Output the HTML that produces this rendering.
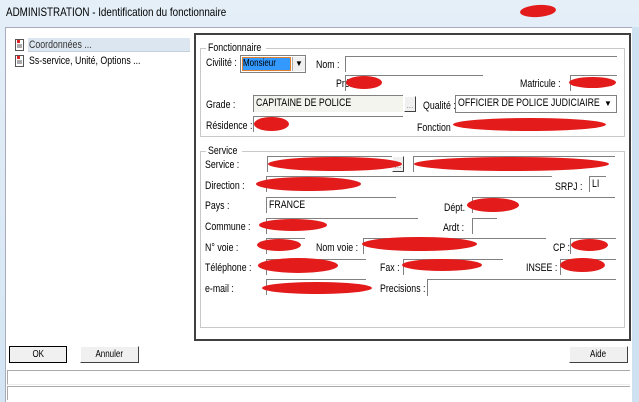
<!DOCTYPE html>
<html><head><meta charset="utf-8"><style>
*{margin:0;padding:0;box-sizing:border-box}
body{width:639px;height:402px;overflow:hidden;background:linear-gradient(#e4eff8,#d3e5f3);font-family:"Liberation Sans",sans-serif;font-size:11px;color:#000;position:relative}
.a{position:absolute;white-space:nowrap}
.t{position:absolute;white-space:nowrap;transform:scaleX(.8);transform-origin:0 0}
.s{display:inline-block;transform:scaleX(.8);transform-origin:0 0;white-space:nowrap}
.f{position:absolute;border-top:1px solid #808080;border-left:1px solid #808080;height:16px}
.r{position:absolute;background:#e31b1b;border-radius:50%}
.btn{position:absolute;border:1px solid #fff;border-right:1px solid #404040;border-bottom:1px solid #404040;background:#f0f0f0;text-align:center;line-height:16px;font-size:10px}
.gb{position:absolute;border:1px solid #c8c8c8}
.gl{position:absolute;background:#fff;padding:0 2px;top:-7px;left:5px;font-size:11px;width:60px}
</style></head><body>
<div class="t" style="left:6px;top:5px;font-size:12px;transform:scaleX(.82)">ADMINISTRATION - Identification du fonctionnaire</div>
<div class="r" style="left:520px;top:5px;width:36px;height:12px;transform:rotate(-4deg)"></div>
<div class="a" style="left:5px;top:27px;width:627px;height:375px;background:#fff;border-top:1px solid #aab;border-left:1px solid #aab"></div>
<div class="a" style="left:632px;top:27px;width:7px;height:375px;background:#cfe2f2"></div>
<!-- tree -->
<div class="a" style="left:28px;top:38px;width:162px;height:14px;background:#dce6f0;border-bottom:1px solid #c5d0dc"></div>
<svg class="a" style="left:15px;top:39px" width="10" height="12"><rect x="0.5" y="0.5" width="8" height="11" fill="#fff" stroke="#555"/><rect x="2" y="1" width="3" height="3" fill="#d22"/><line x1="2" y1="6" x2="7" y2="6" stroke="#555"/><line x1="2" y1="8" x2="7" y2="8" stroke="#555"/></svg>
<svg class="a" style="left:15px;top:55px" width="10" height="12"><rect x="0.5" y="0.5" width="8" height="11" fill="#fff" stroke="#555"/><rect x="2" y="1" width="3" height="3" fill="#d22"/><line x1="2" y1="6" x2="7" y2="6" stroke="#555"/><line x1="2" y1="8" x2="7" y2="8" stroke="#555"/></svg>
<div class="t" style="left:29px;top:39px;color:#333">Coordonnées ...</div>
<div class="t" style="left:29px;top:55px">Ss-service, Unité, Options ...</div>
<!-- main panel -->
<div class="a" style="left:194px;top:33px;width:437px;height:308px;border:2px solid #404040"></div>
<div class="gb" style="left:200px;top:48px;width:425px;height:89px"><span class="gl"><span class="s">Fonctionnaire</span></span></div>
<div class="t" style="left:206px;top:57px">Civilité :</div>
<div class="a" style="left:240px;top:55px;width:66px;height:18px;border:1px solid #808080;background:#fff"></div>
<div class="a" style="left:242px;top:57px;width:49px;height:14px;background:#3399ff;border:1px solid #e08030;font-size:10px;line-height:12px"><span class="s">Monsieur</span></div>
<div class="a" style="left:292px;top:57px;width:13px;height:14px;background:#f0f0f0;border-left:1px solid #aaa;text-align:center;font-size:8px;line-height:14px">▼</div>
<div class="t" style="left:316px;top:59px">Nom :</div>
<div class="f" style="left:345px;top:56px;width:272px"></div>
<div class="t" style="left:336px;top:78px">Prénom :</div>
<div class="f" style="left:345px;top:75px;width:138px"></div>
<div class="r" style="left:346px;top:76px;width:36px;height:13px"></div>
<div class="t" style="left:520px;top:78px">Matricule :</div>
<div class="f" style="left:570px;top:75px;width:47px"></div>
<div class="r" style="left:569px;top:77px;width:47px;height:11px"></div>
<div class="t" style="left:206px;top:99px">Grade :</div>
<div class="a" style="left:253px;top:95px;width:150px;height:17px;background:#f4f4ee;border-top:1px solid #808080;border-left:1px solid #808080;padding:1px 2px"><span class="s">CAPITAINE DE POLICE</span></div>
<div class="btn" style="left:404px;top:96px;width:12px;height:16px;font-size:8px;line-height:18px;color:#777">...</div>
<div class="t" style="left:423px;top:100px">Qualité :</div>
<div class="a" style="left:455px;top:95px;width:162px;height:18px;border:1px solid #808080;background:#fff;padding:1px 2px"><span class="s">OFFICIER DE POLICE JUDICIAIRE</span></div>
<div class="a" style="left:604px;top:99px;font-size:8px">▼</div>
<div class="t" style="left:206px;top:120px">Résidence :</div>
<div class="f" style="left:253px;top:116px;width:150px"></div>
<div class="r" style="left:254px;top:117px;width:35px;height:14px"></div>
<div class="t" style="left:417px;top:122px">Fonction</div>
<div class="r" style="left:453px;top:118px;width:153px;height:13px"></div>
<!-- service -->
<div class="gb" style="left:200px;top:151px;width:425px;height:177px"><span class="gl" style="width:36px"><span class="s">Service</span></span></div>
<div class="t" style="left:205px;top:159px">Service :</div>
<div class="f" style="left:267px;top:156px;width:125px"></div>
<div class="btn" style="left:392px;top:156px;width:12px;height:16px;font-size:8px;line-height:18px;color:#777">...</div>
<div class="r" style="left:268px;top:157px;width:134px;height:14px"></div>
<div class="f" style="left:413px;top:156px;width:202px"></div>
<div class="r" style="left:414px;top:157px;width:195px;height:14px"></div>
<div class="t" style="left:205px;top:180px">Direction :</div>
<div class="f" style="left:266px;top:176px;width:286px"></div>
<div class="r" style="left:256px;top:177px;width:105px;height:14px"></div>
<div class="t" style="left:555px;top:181px">SRPJ :</div>
<div class="f" style="left:589px;top:176px;width:17px;padding:1px 2px"><span class="s">LI</span></div>
<div class="t" style="left:205px;top:200px">Pays :</div>
<div class="f" style="left:266px;top:197px;width:130px;padding:1px 2px"><span class="s">FRANCE</span></div>
<div class="t" style="left:444px;top:202px">Dépt.</div>
<div class="f" style="left:472px;top:197px;width:143px"></div>
<div class="r" style="left:467px;top:198px;width:52px;height:14px"></div>
<div class="t" style="left:205px;top:221px">Commune :</div>
<div class="f" style="left:266px;top:218px;width:152px"></div>
<div class="r" style="left:259px;top:219px;width:68px;height:12px"></div>
<div class="t" style="left:443px;top:222px">Ardt :</div>
<div class="f" style="left:472px;top:218px;width:25px"></div>
<div class="t" style="left:205px;top:242px">N° voie :</div>
<div class="f" style="left:266px;top:238px;width:39px"></div>
<div class="r" style="left:257px;top:239px;width:44px;height:12px"></div>
<div class="t" style="left:316px;top:242px">Nom voie :</div>
<div class="f" style="left:363px;top:238px;width:183px"></div>
<div class="r" style="left:362px;top:237px;width:115px;height:14px"></div>
<div class="t" style="left:553px;top:242px">CP :</div>
<div class="f" style="left:570px;top:238px;width:46px"></div>
<div class="r" style="left:571px;top:239px;width:37px;height:12px"></div>
<div class="t" style="left:205px;top:262px">Téléphone :</div>
<div class="f" style="left:266px;top:259px;width:100px"></div>
<div class="r" style="left:258px;top:258px;width:80px;height:15px"></div>
<div class="t" style="left:380px;top:262px">Fax :</div>
<div class="f" style="left:403px;top:259px;width:100px"></div>
<div class="r" style="left:402px;top:259px;width:80px;height:12px"></div>
<div class="t" style="left:526px;top:262px">INSEE :</div>
<div class="f" style="left:560px;top:259px;width:56px"></div>
<div class="r" style="left:560px;top:258px;width:45px;height:14px"></div>
<div class="t" style="left:205px;top:283px">e-mail :</div>
<div class="f" style="left:266px;top:279px;width:100px"></div>
<div class="r" style="left:262px;top:282px;width:110px;height:12px"></div>
<div class="t" style="left:380px;top:283px">Precisions :</div>
<div class="f" style="left:427px;top:279px;width:189px;height:17px"></div>
<!-- buttons -->
<div class="btn" style="left:9px;top:346px;width:58px;height:17px;border:1px solid #404040;border-left-color:#fff;border-top-color:#fff;outline:1px solid #000;outline-offset:-1px"><span class="s" style="transform-origin:50% 0">OK</span></div>
<div class="btn" style="left:80px;top:346px;width:59px;height:17px"><span class="s" style="transform-origin:50% 0">Annuler</span></div>
<div class="btn" style="left:569px;top:346px;width:59px;height:17px"><span class="s" style="transform-origin:50% 0">Aide</span></div>
<div class="a" style="left:7px;top:370px;width:623px;height:15px;border-top:1px solid #aaa;border-left:1px solid #aaa;border-bottom:1px solid #eee"></div>
<div class="a" style="left:7px;top:386px;width:623px;height:14px;border-top:1px solid #aaa;border-left:1px solid #aaa"></div>
</body></html>
